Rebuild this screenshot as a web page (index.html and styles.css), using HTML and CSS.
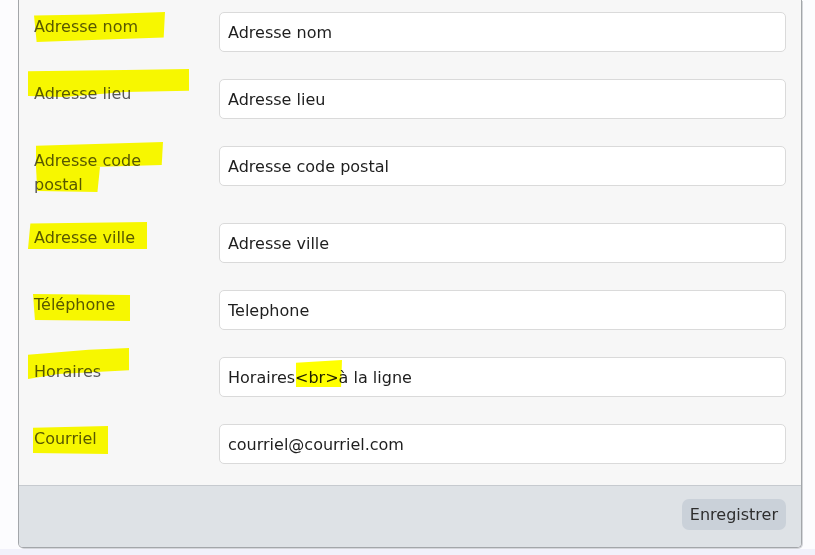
FILE: index.html
```html
<!DOCTYPE html>
<html lang="fr">
<head>
<meta charset="utf-8">
<title>Formulaire</title>
<link rel="stylesheet" href="styles.css">
</head>
<body>
<div class="page">
  <form class="panel">
    <div class="fields">
      <label class="label"><span class="mark m1"></span>Adresse nom</label>
      <div class="field"><input class="input" type="text" value="Adresse nom"></div>

      <label class="label"><span class="mark m2"></span>Adresse lieu</label>
      <div class="field"><input class="input" type="text" value="Adresse lieu"></div>

      <label class="label"><span class="mark m3a"></span><span class="mark m3b"></span>Adresse code postal</label>
      <div class="field"><input class="input" type="text" value="Adresse code postal"></div>

      <label class="label"><span class="mark m4"></span>Adresse ville</label>
      <div class="field"><input class="input" type="text" value="Adresse ville"></div>

      <label class="label"><span class="mark m5"></span>Téléphone</label>
      <div class="field"><input class="input" type="text" value="Telephone"></div>

      <label class="label"><span class="mark m6"></span>Horaires</label>
      <div class="field"><input class="input" type="text" value="Horaires&lt;br&gt;à la ligne"><span class="mark mbr"></span></div>

      <label class="label"><span class="mark m7"></span>Courriel</label>
      <div class="field"><input class="input" type="text" value="courriel@courriel.com"></div>
    </div>
    <div class="footer">
      <button class="btn" type="button">Enregistrer</button>
    </div>
  </form>
</div>
</body>
</html>
```
FILE: styles.css
```css
html, body {
  margin: 0;
  padding: 0;
}
body {
  background: #f1f1fa;
  font-family: "DejaVu Sans", Verdana, sans-serif;
  font-size: 16px;
  height: 555px;
  overflow: hidden;
}
.page {
  background: #fcfcfe;
  padding: 0 13px 1px 18px;
}
.panel {
  background: #f7f7f7;
  border: 1px solid #a3a6aa;
  border-top: none;
  border-radius: 0 0 5px 5px;
  box-shadow: 1px 1px 0 #d4d6da;
  width: 782px;
  overflow: hidden;
}
.fields {
  display: grid;
  grid-template-columns: 150px 1fr;
  column-gap: 35px;
  row-gap: 27px;
  padding: 12px 15px 21px 15px;
}
.label {
  position: relative;
  color: #585858;
  line-height: 24px;
  padding-top: 3px;
  margin-bottom: -1px;
}
.field {
  position: relative;
}
.input {
  display: block;
  box-sizing: border-box;
  width: 100%;
  height: 40px;
  margin: 0;
  padding: 0 8px;
  border: 1px solid #dadada;
  border-radius: 5px;
  background: #ffffff;
  font-family: "DejaVu Sans", Verdana, sans-serif;
  font-size: 16px;
  color: #1e1e1e;
  outline: none;
}
.mark {
  position: absolute;
  background: #ffff00;
  mix-blend-mode: multiply;
  pointer-events: none;
}
.m1 { left: 0; top: 0; width: 131px; height: 30px; clip-path: polygon(0 12%, 45% 8%, 100% 0, 99% 85%, 55% 92%, 2% 100%); }
.m2 { left: -6px; top: -10px; width: 161px; height: 28px; clip-path: polygon(0 8%, 60% 4%, 100% 0, 100% 78%, 60% 82%, 22% 100%, 0 96%); }
.m3a { left: 2px; top: -4px; width: 127px; height: 26px; clip-path: polygon(0 14%, 100% 0, 99% 88%, 45% 96%, 0 100%); }
.m3b { left: 2px; top: 21px; width: 64px; height: 25px; clip-path: polygon(0 0, 100% 0, 96% 100%, 2% 96%); }
.m4 { left: -6px; top: -1px; width: 119px; height: 27px; clip-path: polygon(2% 6%, 100% 0, 100% 100%, 0 100%); }
.m5 { left: -1px; top: 4px; width: 97px; height: 27px; clip-path: polygon(0 0, 100% 4%, 100% 100%, 2% 96%); }
.m6 { left: -6px; top: -9px; width: 101px; height: 31px; clip-path: polygon(0 22%, 60% 6%, 100% 0, 100% 72%, 30% 84%, 0 100%); }
.m7 { left: -1px; top: 2px; width: 75px; height: 28px; clip-path: polygon(0 6%, 100% 0, 100% 100%, 0 96%); }
.mbr { left: 77px; top: 3px; width: 46px; height: 27px; clip-path: polygon(0 10%, 100% 0, 98% 100%, 0 100%); }
.footer {
  display: flex;
  justify-content: flex-end;
  background: #dee2e6;
  border-top: 1px solid #c6cacf;
  padding: 13px 15px 17px 15px;
}
.btn {
  height: 31px;
  padding: 0 8px;
  border: none;
  border-radius: 7px;
  background: #cad1d9;
  font-family: "DejaVu Sans", Verdana, sans-serif;
  font-size: 16px;
  color: #2e2e2e;
}
```
